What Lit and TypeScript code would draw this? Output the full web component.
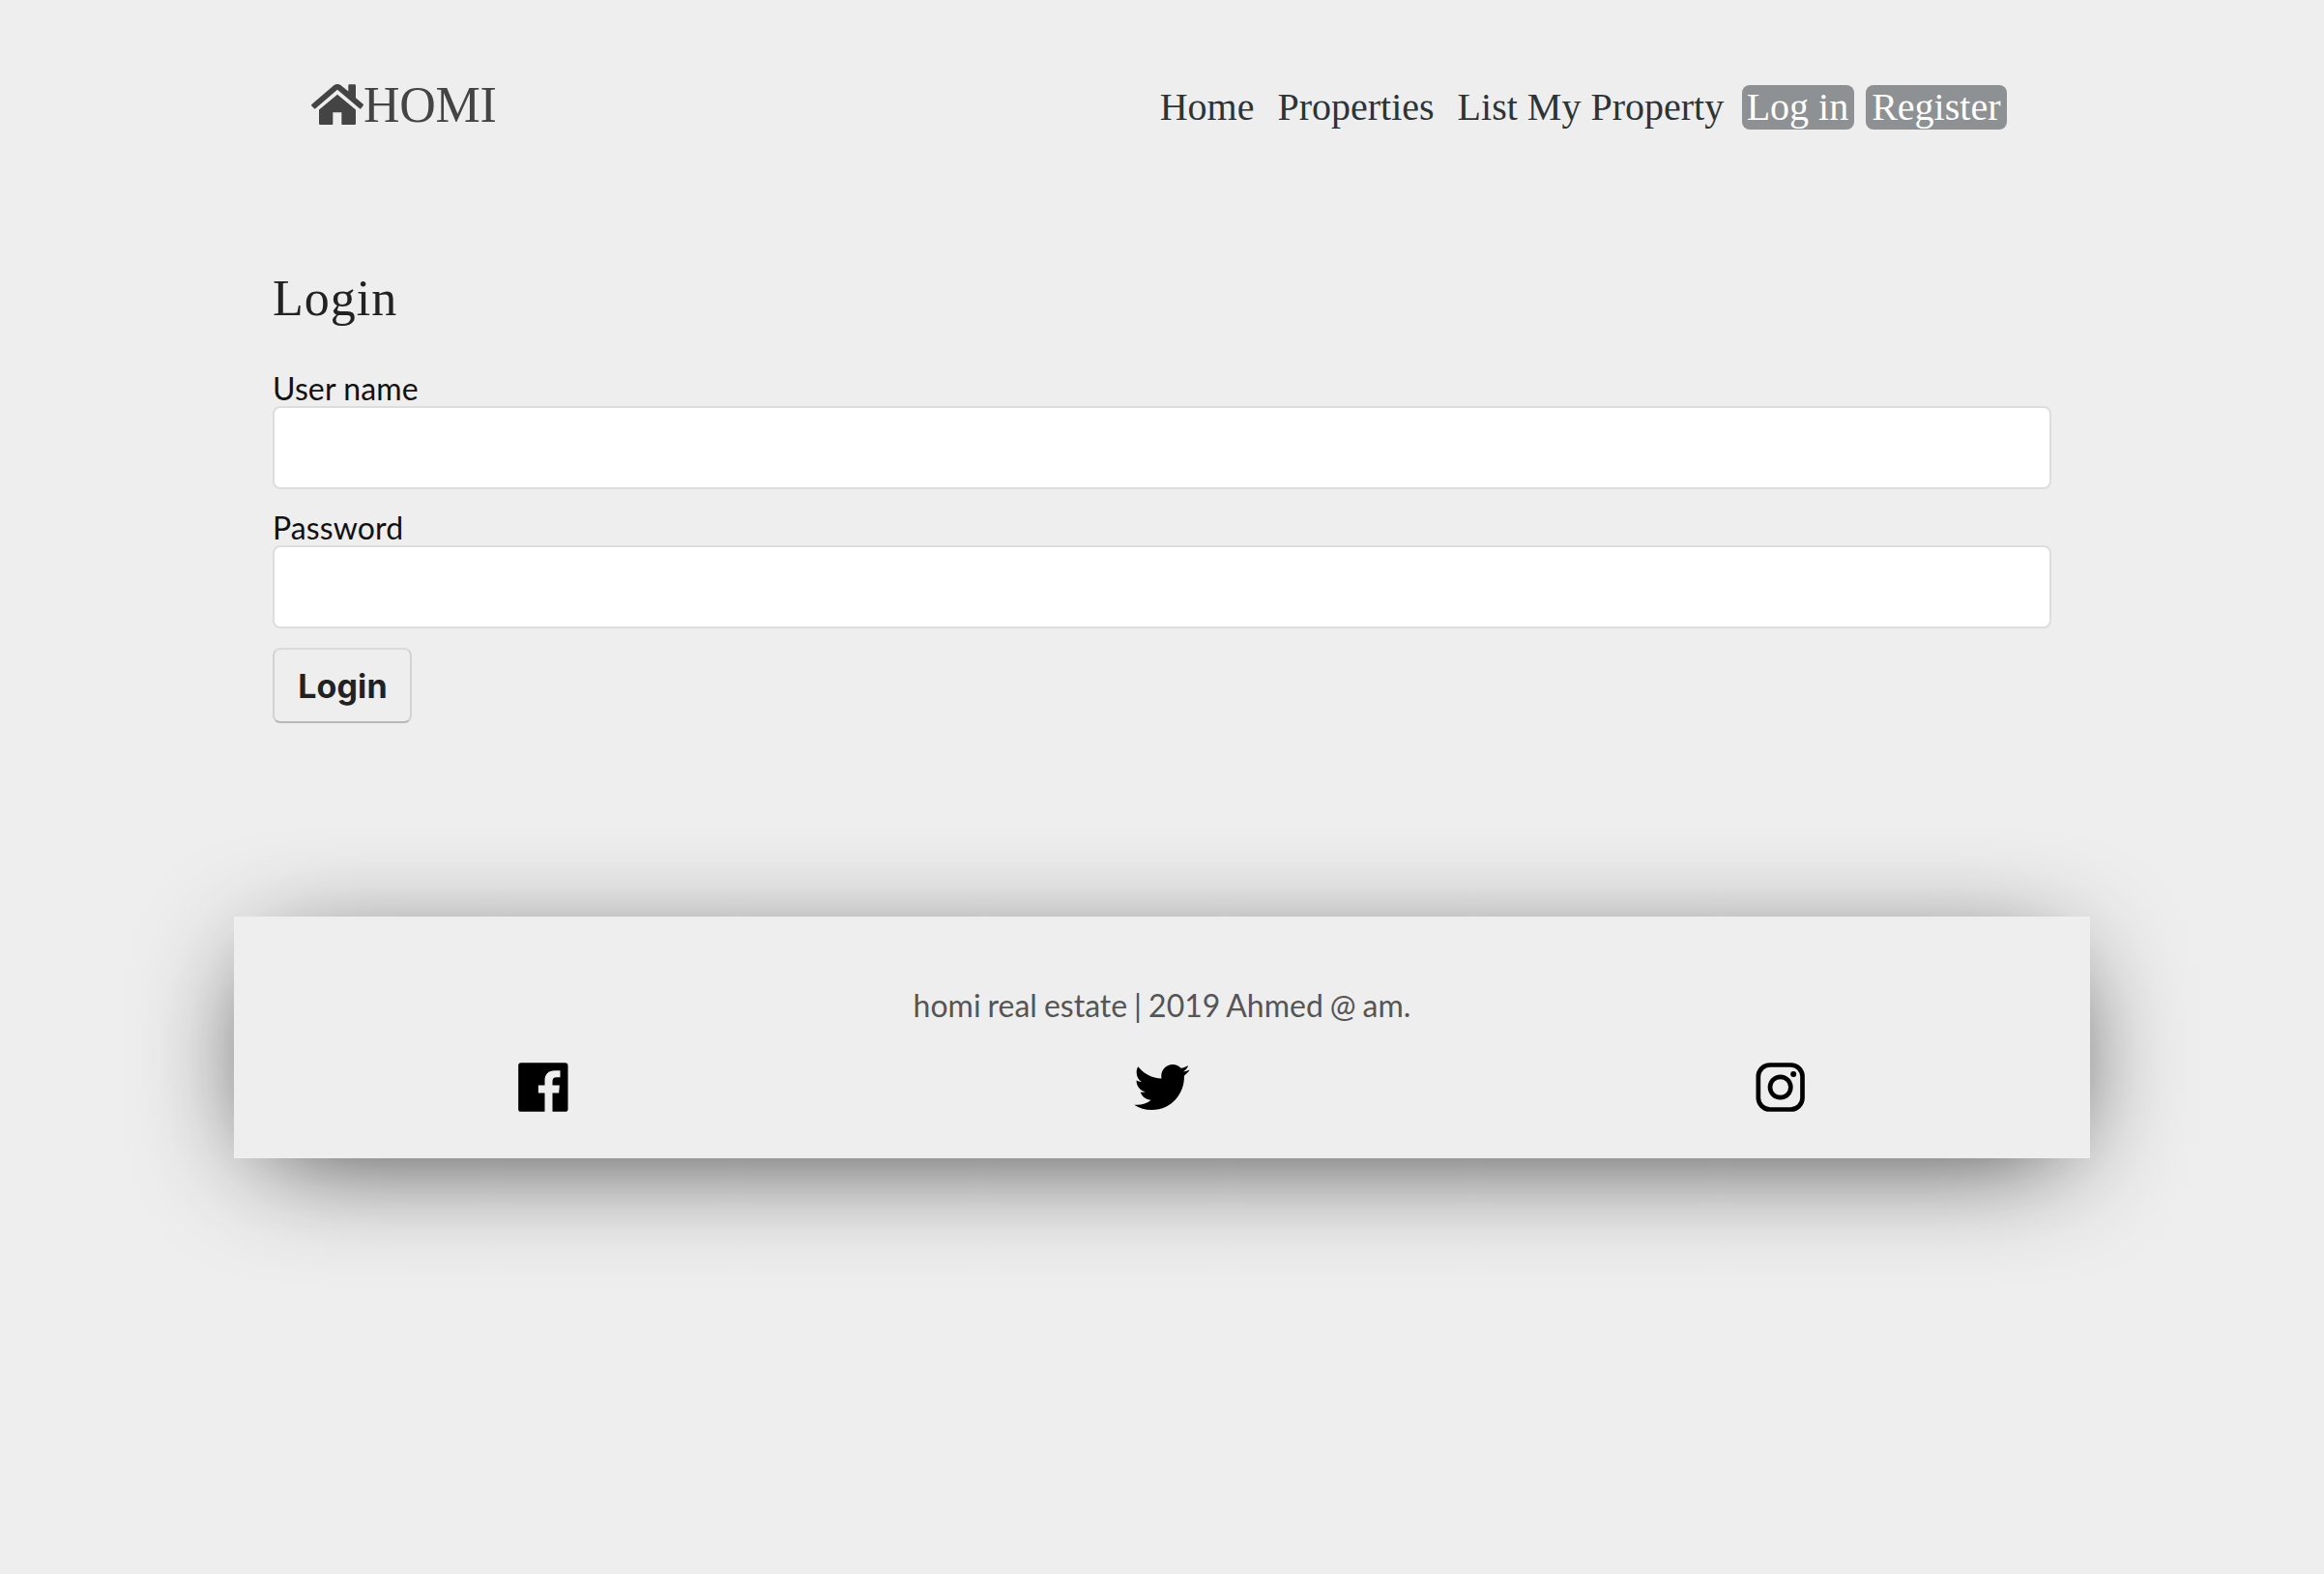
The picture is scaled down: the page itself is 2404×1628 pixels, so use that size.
import { LitElement, html, css, svg } from "lit";
import { customElement } from "lit/decorators.js";

const house = svg`<path d="M68 143 L136 84 Q147 77 158 84 L181 103 V84 Q181 81 184 81 H201 Q204 81 204 84 V123 L227 143 Q229 145 227 147 L220 156 Q218 158 216 156 L147 98 L79 156 Q77 158 75 156 L67 148 Q65 146 68 143Z"/><path d="M147 113 L204 160 V202 Q204 207 199 207 H165 Q160 207 160 204 V168 H133 V204 Q133 207 128 207 H95 Q90 207 90 202 V160Z"/>`;

const facebook = svg`<path d="M117 87 H254 Q263 87 263 96 V231 Q263 239 254 239 H215 V181 H235 L237 157 H215 V146 C215 136 219 132 227 132 H239 V111 H223 C202 111 191 122 191 142 V157 H171 V181 H191 V239 H117 Q109 239 109 231 V96 Q109 87 117 87Z"/>`;

const twitter = svg`<path d="M492 109.5c-17.4 7.7-36 12.9-55.6 15.3 20-12 35.4-31 42.6-53.6-18.7 11.1-39.4 19.2-61.5 23.5C399.8 75.8 374.6 64 346.8 64c-53.5 0-96.8 43.4-96.8 96.9 0 7.6.8 15 2.5 22.1-80.5-4-151.9-42.6-199.6-101.3-8.3 14.3-13.1 31-13.1 48.7 0 33.6 17.2 63.3 43.2 80.7-16-.4-31-4.8-44-12.1v1.2c0 47 33.4 86.1 77.7 95-8.1 2.2-16.7 3.4-25.5 3.4-6.2 0-12.3-.6-18.2-1.8 12.3 38.5 48.1 66.5 90.5 67.3-33.1 26-74.9 41.5-120.3 41.5-7.8 0-15.5-.5-23.1-1.4C62.8 432 113.7 448 168.3 448 346.6 448 444 300.3 444 172.2c0-4.2-.1-8.4-.3-12.5C462.6 146 479 129 492 109.5z"/>`;

const instagram = svg`<g fill="none" stroke="currentColor"><rect x="87.500" y="94" width="137" height="138" rx="36" stroke-width="14"/><circle cx="156" cy="163" r="32" stroke-width="14"/></g><circle cx="196.500" cy="122.500" r="9"/>`;

@customElement("app-root")
export class AppRoot extends LitElement {
  static styles = css`
    :host {
      display: block;
      min-height: 1628px;
      background: #eee;
      font-family: "Lato", sans-serif;
    }
    * {
      box-sizing: border-box;
    }
    svg {
      display: block;
      fill: currentColor;
    }
    .page {
      width: 1920px;
      margin: 0 auto;
    }
    .header {
      display: flex;
      justify-content: space-between;
      align-items: flex-start;
      padding: 79px 86px 0 80px;
      height: 279px;
    }
    .brand {
      display: flex;
      color: #444;
      text-decoration: none;
      font: 52px/58px "Liberation Serif", serif;
      letter-spacing: -0.3px;
    }
    .word {
      padding-top: 1px;
    }
    .house {
      width: 54px;
      height: 42.333px;
      margin: 8px 0 0;
    }
    .nav {
      display: flex;
      gap: 12px;
      margin-top: 9px;
      font: 40px/46px "Liberation Serif", serif;
    }
    .link {
      height: 46px;
      padding: 0 6px;
      color: #2d3436;
      text-decoration: none;
      white-space: nowrap;
    }
    .pill {
      border-radius: 8px;
      background: #8d9193;
      color: #fff;
    }
    .wide {
      padding: 0 6.5px;
    }
    .snug {
      margin-left: 1px;
      padding: 0 5.5px 0 4.5px;
    }
    .form {
      padding: 0 40px;
    }
    .title {
      margin: 0 0 44px;
      padding-top: 1px;
      color: #222;
      font: 400 52px/58px "Liberation Serif", serif;
      letter-spacing: 1px;
    }
    .label {
      display: block;
      height: 38px;
      color: #111;
      font-size: 32px;
      line-height: 40px;
      letter-spacing: 0.12px;
    }
    .input {
      display: block;
      width: 100%;
      height: 86px;
      margin: 0 0 20px;
      padding: 0 16px;
      border: 2px solid #ddd;
      border-radius: 8px;
      background: #fff;
      font: 32px "Lato", sans-serif;
      outline: none;
    }
    .submit {
      display: block;
      width: 144px;
      height: 78px;
      padding: 0 0 0 1px;
      border: 2px solid #d2d2d2;
      border-top-color: #dadada;
      border-bottom-color: #b8b8b8;
      border-radius: 8px;
      background: #eee;
      color: #222;
      font: 700 34px/41px "Inter", sans-serif;
      letter-spacing: 0.1px;
    }
    .footer {
      height: 250px;
      margin-top: 200px;
      padding-top: 73px;
      background: #eee;
      box-shadow: 0 20px 120px -30px rgba(0, 0, 0, 0.85);
    }
    .copy {
      margin: 0;
      color: #555;
      font-size: 32px;
      line-height: 38px;
      text-align: center;
      word-spacing: -1.2px;
    }
    .social {
      display: grid;
      grid-template-columns: repeat(3, 1fr);
      justify-items: center;
      align-items: center;
      height: 51px;
      margin-top: 40px;
    }
    .square {
      width: 51.333px;
      height: 51px;
    }
    .bird {
      width: 58px;
      height: 47px;
    }
  `;

  render() {
    return html`
      <div class="page">
        <header class="header">
          <a class="brand"><svg class="house" viewBox="66 80.500 162 127">${house}</svg><span class="word">HOMI</span></a>
          <nav class="nav">
            <a class="link">Home</a>
            <a class="link">Properties</a>
            <a class="link">List My Property</a>
            <a class="link pill snug">Log in</a>
            <a class="link pill wide">Register</a>
          </nav>
        </header>
        <form class="form">
          <h1 class="title">Login</h1>
          <label class="label" for="user">User name</label>
          <input class="input" id="user" type="text" />
          <label class="label" for="pass">Password</label>
          <input class="input" id="pass" type="password" />
          <button class="submit" type="button">Login</button>
        </form>
        <footer class="footer">
          <p class="copy">homi real estate | 2019 Ahmed @ am.</p>
          <div class="social">
            <svg class="square" viewBox="108.500 86.500 154 153">${facebook}</svg>
            <svg class="bird" viewBox="18 64 476 384" preserveAspectRatio="none">${twitter}</svg>
            <svg class="square" viewBox="79 86.500 154 153">${instagram}</svg>
          </div>
        </footer>
      </div>
    `;
  }
}
